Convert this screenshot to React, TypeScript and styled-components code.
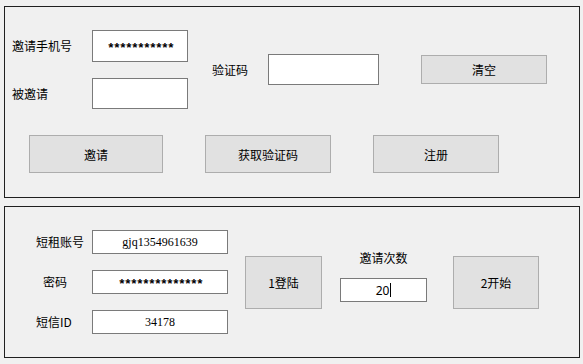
import React from 'react';
import styled, { createGlobalStyle } from 'styled-components';

const GlobalStyle = createGlobalStyle`
  * { box-sizing: border-box; }
  body {
    margin: 0;
    background: #f0f0f0;
    font-family: "Noto Sans CJK SC", "Noto Sans", sans-serif;
    font-size: 12px;
    color: #000;
  }
`;

// Layout
const Page = styled.div`
  width: 583px;
  height: 364px;
  padding: 6px 3px 0 4px;
  display: flex;
  flex-direction: column;
  gap: 8px;
`;

const Panel = styled.div<{ $height: number; $padLeft: number }>`
  width: 576px;
  height: ${(p) => p.$height}px;
  border: 1px solid #1f1f1f;
  background: #f0f0f0;
  padding: 23px 0 0 ${(p) => p.$padLeft}px;
  display: flex;
  flex-direction: column;
`;

const Row = styled.div`
  display: flex;
  align-items: center;
`;

const FieldGrid = styled.div<{ $labelWidth: number; $inputWidth: number; $rows: string; $gap: number }>`
  display: grid;
  grid-template-columns: ${(p) => p.$labelWidth}px ${(p) => p.$inputWidth}px;
  grid-template-rows: ${(p) => p.$rows};
  row-gap: ${(p) => p.$gap}px;
  align-items: center;
`;

const Label = styled.div<{ $indent?: number; $ml?: number }>`
  font-size: 12px;
  line-height: 14px;
  white-space: nowrap;
  padding-left: ${(p) => p.$indent || 0}px;
  margin-left: ${(p) => p.$ml || 0}px;
`;

type Kind = 'plain' | 'serif' | 'stars';

const fieldFont: Record<Kind, string> = {
  plain: 'font-family: "Noto Sans", "Noto Sans CJK SC", sans-serif; font-size: 12px;',
  serif: 'font-family: "Liberation Serif", "Noto Sans CJK SC", serif; font-size: 12px;',
  stars: 'font-family: "Liberation Mono", monospace; font-size: 13px; letter-spacing: -1.8px; padding-top: 4px; font-weight: bold;',
};

const Field = styled.div<{ $w?: number; $h: number; $ml?: number; $kind?: Kind }>`
  width: ${(p) => (p.$w ? `${p.$w}px` : '100%')};
  height: ${(p) => p.$h}px;
  margin-left: ${(p) => p.$ml || 0}px;
  background: #fff;
  border: 1px solid #7a7a7a;
  display: flex;
  align-items: center;
  justify-content: center;
  white-space: nowrap;
  ${(p) => fieldFont[p.$kind || 'plain']}
`;

const Caret = styled.span`
  display: inline-block;
  width: 1px;
  height: 14px;
  background: #000;
  margin-left: 1px;
`;

const Button = styled.div<{ $w: number; $h: number; $ml?: number }>`
  width: ${(p) => p.$w}px;
  height: ${(p) => p.$h}px;
  margin-left: ${(p) => p.$ml || 0}px;
  flex-shrink: 0;
  background: #e1e1e1;
  border: 1px solid #adadad;
  display: flex;
  align-items: center;
  justify-content: center;
  font-size: 12px;
  white-space: nowrap;
`;

const ButtonRow = styled.div`
  display: flex;
  gap: 42px;
  margin-top: 26px;
  margin-left: 17px;
`;

const CountBlock = styled.div`
  width: 87px;
  margin-left: 18px;
  margin-bottom: 11px;
  display: flex;
  flex-direction: column;
  align-items: center;
  gap: 13px;
`;

const App: React.FC = () => {
  return (
    <>
      <GlobalStyle />
      <Page>
        {/* invite panel */}
        <Panel $height={192} $padLeft={7}>
          <Row>
            <FieldGrid $labelWidth={80} $inputWidth={96} $rows="32px 31px" $gap={16}>
              <Label>邀请手机号</Label>
              <Field $h={32} $kind="stars">***********</Field>
              <Label>被邀请</Label>
              <Field $h={31} />
            </FieldGrid>
            <Label $ml={24}>验证码</Label>
            <Field $w={111} $h={31} $ml={20} />
            <Button $w={126} $h={29} $ml={42}>清空</Button>
          </Row>
          <ButtonRow>
            <Button $w={134} $h={38}>邀请</Button>
            <Button $w={126} $h={38}>获取验证码</Button>
            <Button $w={126} $h={38}>注册</Button>
          </ButtonRow>
        </Panel>

        {/* account panel */}
        <Panel $height={152} $padLeft={31}>
          <Row>
            <FieldGrid $labelWidth={56} $inputWidth={136} $rows="24px 24px 24px" $gap={16}>
              <Label>短租账号</Label>
              <Field $h={24} $kind="serif">gjq1354961639</Field>
              <Label $indent={7}>密码</Label>
              <Field $h={24} $kind="stars">**************</Field>
              <Label>短信ID</Label>
              <Field $h={24} $kind="serif">34178</Field>
            </FieldGrid>
            <Button $w={77} $h={53} $ml={17}>1登陆</Button>
            <CountBlock>
              <Label>邀请次数</Label>
              <Field $h={24}>
                20<Caret />
              </Field>
            </CountBlock>
            <Button $w={86} $h={53} $ml={26}>2开始</Button>
          </Row>
        </Panel>
      </Page>
    </>
  );
};

export default App;
